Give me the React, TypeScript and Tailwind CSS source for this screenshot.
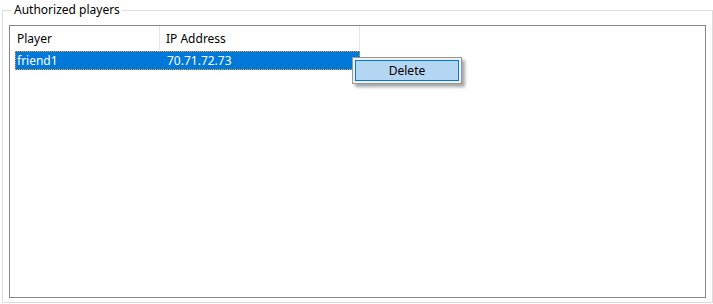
import React from "react";

const players = [{ name: "friend1", ip: "70.71.72.73" }];

const App = () => {
  return (
    <div
      className="relative w-[713px] h-[304px] bg-white text-[12px] text-black"
      style={{ fontFamily: '"Segoe UI", "Noto Sans", sans-serif' }}
    >
      <div className="pt-[2px] pl-[2px]">
        <fieldset className="w-[709px] h-[301px] border border-[#dcdcdc] px-[6px] pb-[5px] m-0">
          <legend className="ml-[3px] px-[2px] leading-[16px]">Authorized players</legend>
          <div className="mt-[7px] w-[697px] h-[273px] border border-[#828790] bg-white">
            <div className="flex h-[24px] leading-[25px]">
              <div className="w-[150px] pl-[7px] border-r border-[#e5e5e5]">Player</div>
              <div className="w-[200px] pl-[6px] border-r border-[#e5e5e5]">IP Address</div>
            </div>
            {players.map((p, i) => (
              <div
                key={i}
                className="flex ml-[5px] mt-[1px] w-[345px] h-[19px] leading-[17px] bg-[#0078d7] text-white border border-dotted border-[#f39a2c]"
              >
                <div className="w-[145px] pl-[1px]">{p.name}</div>
                <div className="w-[198px] pl-[6px]">{p.ip}</div>
              </div>
            ))}
          </div>
        </fieldset>
      </div>

      {/* context menu */}
      <div className="absolute left-[352px] top-[57px] w-[110px] h-[27px] border border-[#979797] bg-[#f0f0f0] p-[2px] shadow-[3px_3px_3px_rgba(0,0,0,0.35)]">
        <div className="h-full border border-[#0078d7] bg-[#b5d6f3] flex items-center justify-center leading-none">
          Delete
        </div>
      </div>
    </div>
  );
};

export default App;
